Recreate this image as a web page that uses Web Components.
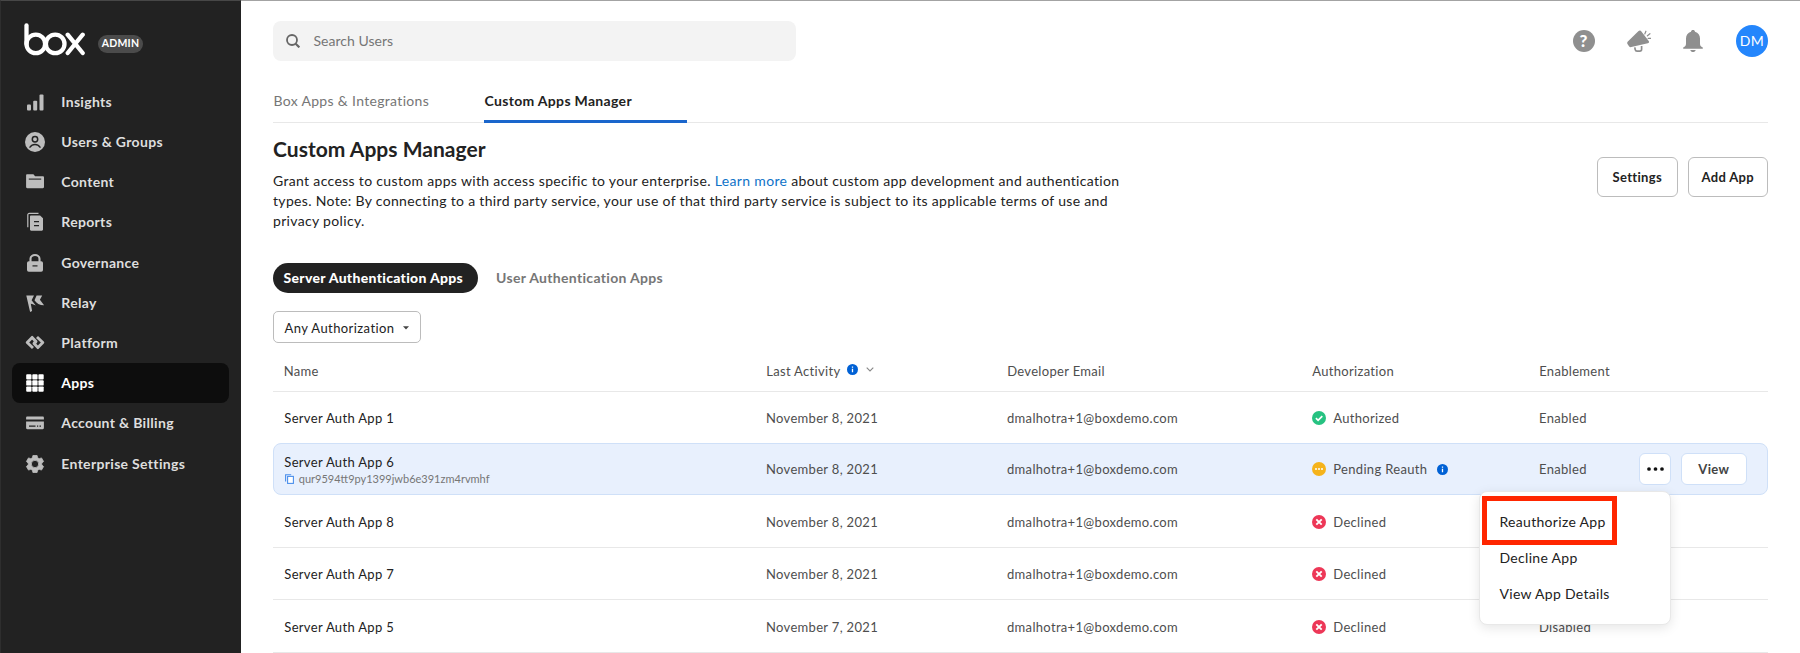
<!DOCTYPE html>
<html lang="en">
<head>
<meta charset="utf-8">
<title>Custom Apps Manager</title>
<style>
html, body { margin: 0; height: 100%; overflow: hidden; background: #fff; }
body { font: 13px/20px Lato, "Liberation Sans", sans-serif; letter-spacing: .32px; color: #222; }
</style>
</head>
<body>
<admin-app></admin-app>
<script>
const define = (name, html, setup) => {
  const tpl = document.createElement('template');
  tpl.innerHTML = html;
  customElements.define(name, class extends HTMLElement {
    connectedCallback() {
      if (this.shadowRoot) return;
      const root = this.attachShadow({ mode: 'open' });
      root.append(tpl.content.cloneNode(true));
      if (setup) setup(this, root);
    }
  });
};

const ICONS = {
  insights: ['0 0 20 20', '<g fill="currentColor"><rect x="2" y="12.6" width="4" height="6" rx="1"/><rect x="8.2" y="8.8" width="4" height="9.8" rx="1"/><rect x="14.5" y="2.6" width="4" height="16" rx="1"/></g>'],
  users: ['0 0 20 20', '<circle cx="10" cy="10" r="10" fill="currentColor"/><g fill="none" stroke="#222" stroke-width="1.5" stroke-linecap="round"><circle cx="10" cy="7.3" r="2.7"/><path d="M5 15.2c2.4-3.6 7.6-3.6 10 0"/></g>'],
  content: ['0 0 20 20', '<path fill="currentColor" d="M2.2 2.2h6.2l1.7 2h7.7c.7 0 1.2.5 1.2 1.2v9.6c0 .7-.5 1.2-1.2 1.2H2.3c-.7 0-1.2-.5-1.2-1.2V3.4c0-.7.4-1.2 1.1-1.2z"/><path d="M3.8 7.1h12.4" stroke="#222" stroke-width="1.1"/>'],
  reports: ['0 0 20 20', '<path d="M13.5 1.4H4.2A1.4 1.4 0 0 0 2.8 2.8v12.5" fill="none" stroke="currentColor" stroke-width="1.2"/><path fill="currentColor" d="M5.800 3.600h9.300L18 6.200v11.300c0 .7-.5 1.200-1.200 1.200H6.200c-.7 0-1.200-.5-1.200-1.200V4.400c0-.5.3-.8.8-.8z"/><path d="M9 9.700h5M9 13.700h5" stroke="#222" stroke-width="1.200"/>'],
  governance: ['0 0 20 20', '<rect x="2" y="8.300" width="16" height="10.500" rx="1.800" fill="currentColor"/><path d="M5.500 9V5.800c0-5 9-5 9 0V9" fill="none" stroke="currentColor" stroke-width="2.100"/><path d="M7.500 12.900h5" stroke="#222" stroke-width="1.200"/>'],
  relay: ['0 0 20 20', '<path fill="currentColor" d="M1.300 2.500h7.700L6.600 7.300l4.200 5.100-3.700-1.300-1.300-.3 1.300 7.300-2 .8z"/><path fill="currentColor" d="M11.600 2.500h5.600l-2.300 4.300 4.200 5.500c-4.500-.2-7.700-2-9.600-5.100z"/>'],
  platform: ['0 0 20 20', '<g fill="none" stroke="currentColor" stroke-width="2.900" stroke-linejoin="round"><path d="M8 15 2.200 9.500 7.100 4.400 11 8.500 9.600 10.300"/><path d="M12 4l5.800 5.500-4.900 5.100L9 10.500 10.400 8.700"/></g>'],
  apps: ['0 0 20 20', '<g fill="currentColor">' + [1.2, 7.3, 13.4].map(y => [1.2, 7.3, 13.4].map(x => `<rect x="${x}" y="${y}" width="5.300" height="5.300" rx=".9"/>`).join('')).join('') + '</g>'],
  billing: ['0 0 20 20', '<path fill="currentColor" d="M2.300 3.600h15.400c.7 0 1.200.5 1.200 1.200v1.600H1.100V4.800c0-.7.5-1.200 1.200-1.200zM1.100 8.400h17.800v6.700c0 .7-.5 1.200-1.200 1.200H2.300c-.7 0-1.200-.5-1.200-1.200z"/><path d="M4 13.200h6.500M12 13.200h1.200M14.500 13.200h1.500" stroke="#222" stroke-width="1.200"/>'],
  settings: ['0 0 20 20', '<path fill="currentColor" fill-rule="evenodd" stroke="currentColor" stroke-width=".8" stroke-linejoin="round" d="M7.900 1.500h4.200l.5 2.300 1.600.9 2.300-.8 2.100 3.600-1.800 1.600v1.800l1.800 1.600-2.100 3.600-2.300-.8-1.600.9-.5 2.300H7.900l-.5-2.300-1.600-.9-2.300.8-2.100-3.600 1.800-1.600V9.100L1.400 7.500l2.100-3.600 2.300.8 1.600-.9zM10 6.300a3.700 3.700 0 1 0 0 7.400 3.700 3.700 0 0 0 0-7.400z"/>'],
  search: ['0 0 14 14', '<g fill="none" stroke="currentColor" stroke-width="1.800"><circle cx="6" cy="6" r="5"/><path d="M9.700 9.700 13.300 13.400" stroke-width="2.100"/></g>'],
  megaphone: ['0 0 24 22', '<path fill="currentColor" d="M1.100 11.300 11.300 1.300c1-.9 2.300-1 3.100.1l7.300 9.600c.7 1.100.3 2-.9 2.300L4.300 17.100c-1 .2-1.700 0-2.300-.8L.5 13.900c-.6-1-.3-1.800.6-2.600z"/><path d="M7.800 17.300l.4 2.300c.2 1 .8 1.500 1.800 1.500h2.800c1.200 0 1.800-.7 1.800-1.800v-3.200" fill="none" stroke="currentColor" stroke-width="1.700"/><path d="M17.800 3.900l1.100-2.700M20.400 5.800l2.500-2.100M21.200 8.400h2.600" fill="none" stroke="currentColor" stroke-width="1.200" stroke-linecap="round"/>'],
  bell: ['0 0 20 22', '<path fill="currentColor" d="M10 0c1.200 0 1.900.7 2 1.700 3.200.9 5 3.300 5 6.800v5c0 2.100.8 3.200 2.800 4.100v1.200H.2v-1.200c2-.9 2.800-2 2.800-4.100v-5c0-3.500 1.800-5.900 5-6.800.1-1 .8-1.700 2-1.700zM7.300 20.100h5.400c-.4 1.200-1.400 2-2.700 2s-2.300-.8-2.700-2z"/>'],
  ok: ['0 0 14 14', '<circle cx="7" cy="7" r="7" fill="#26c281"/><path d="M3.900 7.200l2.200 2.200 4.200-4.300" fill="none" stroke="#fff" stroke-width="1.700"/>'],
  wait: ['0 0 14 14', '<circle cx="7" cy="7" r="7" fill="#f5b31b"/><g fill="#fff"><circle cx="4" cy="7.100" r="1"/><circle cx="7" cy="7.100" r="1"/><circle cx="10" cy="7.100" r="1"/></g>'],
  no: ['0 0 14 14', '<circle cx="7" cy="7" r="7" fill="#ed3757"/><path d="M4.300 4.300l5.400 5.400M9.700 4.300L4.300 9.700" stroke="#fff" stroke-width="1.900"/>'],
  info: ['0 0 11 11', '<circle cx="5.500" cy="5.500" r="5.500" fill="#0061d5"/><path d="M5.500 4.700v3.500M5.500 2.500v1.300" stroke="#fff" stroke-width="1.300"/>'],
  chevron: ['0 0 8 5', '<path d="M.7.700 4 4 7.300.7" fill="none" stroke="#888" stroke-width="1.100"/>'],
  caret: ['0 0 6 4', '<path d="M0 .3h6L3 3.600z" fill="#444"/>'],
  copy: ['0 0 9 10', '<path d="M.6 7.500V.7h5.600" fill="none" stroke="#4b8fec" stroke-width="1.100"/><rect x="2.600" y="2.400" width="5.800" height="7" fill="#fff" stroke="#4b8fec" stroke-width="1.100"/>'],
  dots: ['0 0 17 4', '<g fill="#111"><circle cx="2" cy="2" r="1.850"/><circle cx="8.500" cy="2" r="1.850"/><circle cx="15" cy="2" r="1.850"/></g>']
};
define('ui-icon', '<style>:host{display:block;flex:none}svg{display:block}</style><svg></svg>', (el, root) => {
  const [box, body] = ICONS[el.getAttribute('name')];
  const [, , w, h] = box.split(' ');
  const svg = root.querySelector('svg');
  svg.setAttribute('viewBox', box);
  svg.setAttribute('width', w);
  svg.setAttribute('height', h);
  svg.innerHTML = body;
});

define('box-brand', `<style>
:host{display:flex;align-items:flex-start;height:33px}
svg{display:block}
span{margin:12px 0 0 12px;width:45px;height:17.500px;border-radius:9px;background:#4b4b4b;color:#fff;font:700 10.500px/17.500px Lato,sans-serif;letter-spacing:.2px;text-align:center}
</style>
<svg width="62" height="33" viewBox="24 23 62 33" fill="none" stroke="#fff" stroke-width="4.300" stroke-linecap="round"><path d="M26.500 25.400V44"/><circle cx="35.800" cy="43.900" r="9.300"/><circle cx="55.200" cy="43.900" r="9.300"/><path d="M67.700 34.700 82.700 53M82.700 34.700 67.700 53"/></svg>
<span>ADMIN</span>`);

define('nav-item', `<style>
:host{display:flex;align-items:center;gap:16.300px;height:40.200px;box-sizing:border-box;padding-left:13px;border-radius:8px;color:#bdbdbd}
:host([active]){background:#0d0d0d;color:#fff}
span{font-size:14px;font-weight:700;color:#dedede}
:host([active]) span{color:#fff}
</style><slot name="icon"></slot><span><slot></slot></span>`);

define('side-bar', `<style>
:host{display:block;box-sizing:border-box;width:241px;height:653px;background:#222;border-top:1px solid #474747;border-left:1px solid #2e2e2e;padding:22px 12px 0 11px}
box-brand{margin:0 0 25.800px 12px}
</style><box-brand></box-brand><nav></nav>`, (el, root) => {
  const items = [['insights', 'Insights'], ['users', 'Users &amp; Groups'], ['content', 'Content'], ['reports', 'Reports'], ['governance', 'Governance'], ['relay', 'Relay'], ['platform', 'Platform'], ['apps', 'Apps'], ['billing', 'Account &amp; Billing'], ['settings', 'Enterprise Settings']];
  root.querySelector('nav').innerHTML = items.map(([i, t]) => `<nav-item${i === 'apps' ? ' active' : ''}><ui-icon slot="icon" name="${i}"></ui-icon>${t}</nav-item>`).join('');
});

define('top-bar', `<style>
:host{display:flex;align-items:center;height:40px}
.search{display:flex;align-items:center;gap:13.500px;box-sizing:border-box;width:523px;height:40px;padding-left:13px;border-radius:8px;background:#f3f3f3;color:#767676;font-size:14px;letter-spacing:.02px;margin-right:auto}
.search ui-icon{color:#666}
ui-icon{color:#8f8f8f}
.help{width:22px;height:22px;border-radius:50%;background:#8f8f8f;color:#fff;font:900 17px/22px Lato,sans-serif;letter-spacing:0;text-align:center;margin-right:32px}
.mega{margin-right:32px}
.avatar{margin-left:33.500px;width:32px;height:32px;border-radius:50%;background:#2486fc;color:#fff;font-size:14px;line-height:32px;text-align:center}
</style>
<div class="search"><ui-icon name="search"></ui-icon><span>Search Users</span></div>
<div class="help">?</div><ui-icon class="mega" name="megaphone"></ui-icon><ui-icon name="bell"></ui-icon><div class="avatar">DM</div>`);

define('tab-bar', `<style>
:host{display:flex;height:44px;border-bottom:1px solid #e8e8e8;box-sizing:border-box;font-size:14px}
::slotted(*){box-sizing:border-box;height:44px;line-height:44px;color:#767676;width:211px;padding-left:.5px}
::slotted([active]){font-weight:700;color:#222;width:203px;border-bottom:3px solid #1a66cc}
</style><slot></slot>`);

define('ui-button', `<style>
:host{display:flex;align-items:center;justify-content:center;box-sizing:border-box;width:80.500px;height:40px;border:1px solid #bcbcbc;border-radius:6px;background:#fff;font-weight:700;color:#222}
:host([small]){width:65.500px;height:32px;border-color:#cfe0f8;color:#444}
:host([square]){width:32px}
</style><slot></slot>`);

define('page-intro', `<style>
:host{display:flex;justify-content:space-between}
h1{margin:0;font-size:21px;line-height:28px;letter-spacing:.03px}
p{margin:8px 0 0;width:860px;font-size:14px;line-height:20.200px;letter-spacing:.33px}
a{color:#0f73c8}
.actions{display:flex;gap:10px;margin-top:22.500px}
</style>
<div><h1>Custom Apps Manager</h1><p>Grant access to custom apps with access specific to your enterprise. <a>Learn more</a> about custom app development and authentication types. Note: By connecting to a third party service, your use of that third party service is subject to its applicable terms of use and privacy policy.</p></div>
<div class="actions"><ui-button>Settings</ui-button><ui-button>Add App</ui-button></div>`);

define('pill-tabs', `<style>
:host{display:flex;height:29.500px;font-size:14px;line-height:30.500px;font-weight:700;color:#767676}
b{box-sizing:border-box;width:205px;padding-left:10.500px;margin-right:18px;border-radius:15px;background:#222;color:#fff;letter-spacing:.3px}
</style><b>Server Authentication Apps</b><span>User Authentication Apps</span>`);

define('filter-select', `<style>
:host{display:flex;align-items:center;gap:9px;box-sizing:border-box;width:148px;height:32.500px;padding:1.500px 0 0 10.500px;border:1px solid #bcbcbc;border-radius:5px;letter-spacing:.42px}
</style><slot></slot><ui-icon name="caret"></ui-icon>`);

define('action-menu', `<style>
:host{display:block;box-sizing:border-box;width:192px;height:134px;padding-top:12px;border:1px solid #e8e8e8;border-radius:8px;background:#fff;box-shadow:0 3px 12px rgba(0,0,0,.1);font-size:14px;letter-spacing:.3px;color:#222}
div{height:36px;line-height:36px;padding-left:19.500px}
.mark{position:absolute;left:2px;top:4px;box-sizing:border-box;width:135px;height:49px;padding:0;border:5px solid #ff2600}
</style><div>Reauthorize App</div><div>Decline App</div><div>View App Details</div><div class="mark"></div>`);

define('app-row', `<style>
:host{display:grid;grid-template-columns:481.700px 241px 305px 227px 1fr;align-items:center;box-sizing:border-box;height:52.300px;padding-left:11.300px;border-bottom:1px solid #e8e8e8;color:#4e4e4e;position:relative}
:host([head]){padding-left:11.500px}
:host([selected]){background:#e8f0fd;border:1px solid #cfe0f8;border-radius:8px;padding-left:10.300px;z-index:1}
.name{color:#222}
:host([head]) .name{color:#4e4e4e;margin-left:-.8px}
div{display:flex;align-items:center}
.id{font-size:11px;line-height:14px;letter-spacing:0;color:#767676;gap:4.500px}
.id ui-icon{margin-left:1px}
div.stack{flex-direction:column;align-items:flex-start}
.status{gap:7.300px}
.status ui-icon[name=info]{margin-left:2px}
.en{justify-content:space-between}
.act{gap:10px;padding-right:20.500px}
action-menu{position:absolute;right:96px;top:46.500px}
</style><div class="name"></div><div class="date"></div><div class="mail"></div><div class="status"></div><div class="en"></div>`, (el, root) => {
  const d = el.dataset, q = s => root.querySelector(s);
  if (el.hasAttribute('selected')) {
    q('.name').innerHTML = `<div class="stack"><div>${d.name}</div><div class="id"><ui-icon name="copy"></ui-icon>qur9594tt9py1399jwb6e391zm4rvmhf</div></div>`;
    q('.en').innerHTML = '<span>Enabled</span><div class="act"><ui-button small square><ui-icon name="dots"></ui-icon></ui-button><ui-button small>View</ui-button></div>';
    root.append(document.createElement('action-menu'));
  } else {
    q('.name').textContent = d.name;
    q('.en').textContent = d.enabled;
  }
  q('.date').innerHTML = d.date;
  q('.mail').textContent = d.mail || 'dmalhotra+1@boxdemo.com';
  q('.status').innerHTML = (d.icon ? `<ui-icon name="${d.icon}"></ui-icon>` : '') + `<span>${d.status}</span>` + (d.icon === 'wait' ? '<ui-icon name="info"></ui-icon>' : '');
});

define('apps-table', `<style>
:host{display:block}
app-row[head]{height:43px;padding-top:1.500px}
.first{height:51px;padding-top:1px;border-bottom-color:transparent}
.after{height:52.500px;padding-top:1px}
</style>
<app-row head data-name="Name" data-date='Last Activity<ui-icon name="info" style="margin:-3px 0 0 7px"></ui-icon><ui-icon name="chevron" style="margin:-2px 0 0 7.500px"></ui-icon>' data-mail="Developer Email" data-status="Authorization" data-enabled="Enablement"></app-row>
<app-row class="first" data-name="Server Auth App 1" data-date="November 8, 2021" data-icon="ok" data-status="Authorized" data-enabled="Enabled"></app-row>
<app-row selected data-name="Server Auth App 6" data-date="November 8, 2021" data-icon="wait" data-status="Pending Reauth"></app-row>
<app-row class="after" data-name="Server Auth App 8" data-date="November 8, 2021" data-icon="no" data-status="Declined" data-enabled=""></app-row>
<app-row class="after" data-name="Server Auth App 7" data-date="November 8, 2021" data-icon="no" data-status="Declined" data-enabled=""></app-row>
<app-row class="after" data-name="Server Auth App 5" data-date="November 7, 2021" data-icon="no" data-status="Declined" data-enabled="Disabled"></app-row>`);

define('admin-app', `<style>
:host{display:flex;height:653px;overflow:hidden}
main{flex:1;border-top:1px solid #a3a3a3;padding:20px 32px 0;height:632px}
tab-bar{margin-top:18px}
page-intro{margin-top:11.500px}
pill-tabs{margin-top:32px}
filter-select{margin-top:18px}
apps-table{margin-top:6px}
</style>
<side-bar></side-bar>
<main><top-bar></top-bar><tab-bar><span>Box Apps &amp; Integrations</span><span active>Custom Apps Manager</span></tab-bar><page-intro></page-intro><pill-tabs></pill-tabs><filter-select>Any Authorization</filter-select><apps-table></apps-table></main>`);
</script>
</body>
</html>
